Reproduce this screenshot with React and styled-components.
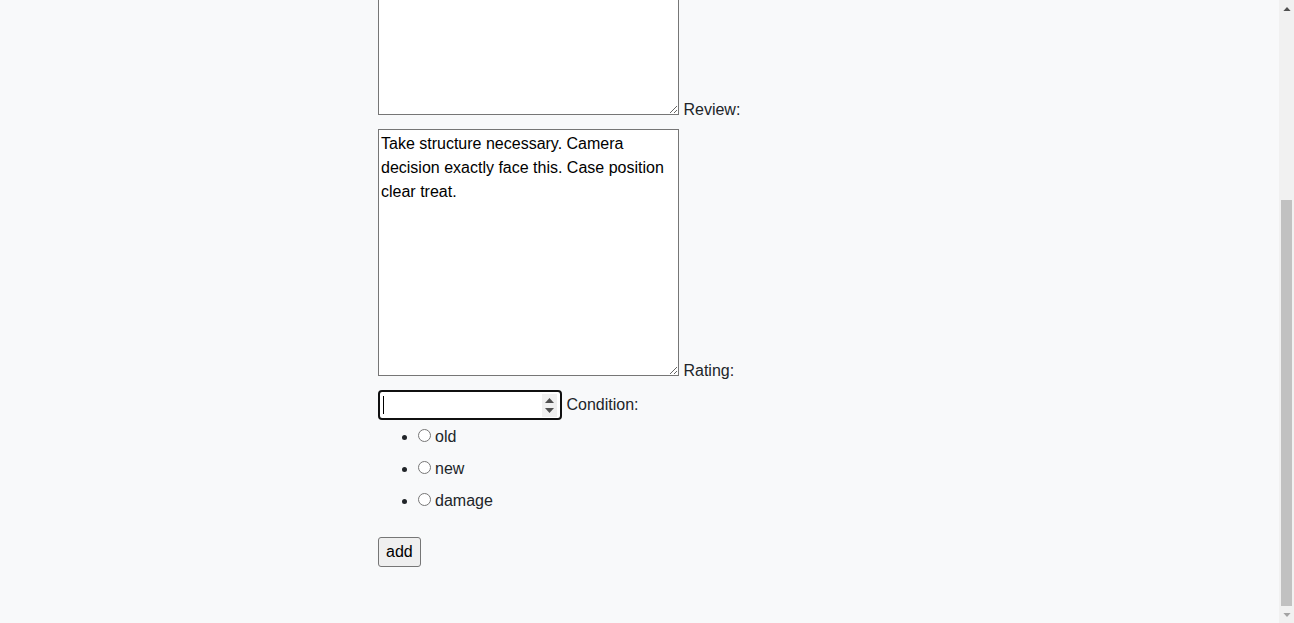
import React, { useLayoutEffect, useRef } from 'react'
import styled, { createGlobalStyle } from 'styled-components'

const GlobalStyle = createGlobalStyle`
html, body {
  margin:0;
  padding:0;
  overflow:hidden;
}
`

const Page = styled.div`
display:flex;
height:100vh;
background:#f8f9fa;
color:#212529;
font-family:"Liberation Sans", Arial, sans-serif;
font-size:16px;
line-height:1.5;
`

const Viewport = styled.div`
flex:1;
min-width:0;
overflow:hidden;
`

const ScrollBar = styled.div`
display:flex;
flex-direction:column;
width:15px;
flex:none;
background:#f1f1f1;
`

const ScrollArrow = styled.div`
display:flex;
align-items:center;
justify-content:center;
height:17px;
flex:none;
`

const ScrollTrack = styled.div`
flex:1;
display:flex;
flex-direction:column;
justify-content:flex-end;
padding:0 2px;
`

const ScrollThumb = styled.div`
height:406px;
background:#c1c1c1;
`

const Form = styled.form`
width:523px;
margin:0 auto;
padding:16px 0 56px;
`

const FieldLabel = styled.label``

const TextArea = styled.textarea`
display:inline-block;
width:301px;
height:247px;
box-sizing:border-box;
margin:7px 0 0;
padding:2px;
border:1px solid #767676;
font:inherit;
color:#000;
background:#fff;
resize:both;
vertical-align:baseline;
`

const NumberField = styled.span`
display:inline-flex;
align-items:center;
width:184px;
height:30px;
box-sizing:border-box;
margin-top:7px;
border:2px solid #101010;
border-radius:4px;
background:#fff;
padding:0 3px;
vertical-align:-4px;
`

const Caret = styled.span`
width:1px;
height:18px;
background:#000;
flex:none;
`

const NumberInput = styled.input`
flex:1;
min-width:0;
border:none;
outline:none;
font:inherit;
padding:0;
background:transparent;
appearance:textfield;
&::-webkit-inner-spin-button,
&::-webkit-outer-spin-button{
  -webkit-appearance:none;
  margin:0;
}
`

const Spinner = styled.span`
display:flex;
flex-direction:column;
align-items:center;
justify-content:space-between;
width:15px;
height:23px;
box-sizing:border-box;
padding:4px 0;
background:#f0f0f0;
flex:none;
`

const ConditionList = styled.ul`
margin:1px 0 20px;
padding-left:40px;
`

const ConditionItem = styled.li`
padding:4px 0;
`

const Radio = styled.input`
margin:3px 4px 0 0;
width:13px;
height:13px;
`

const AddButton = styled.button`
font:inherit;
line-height:24px;
color:#000;
padding:2px 7px;
border:1px solid #767676;
border-radius:3px;
background:#efefef;
margin:0;
`

const Arrow = ({ up, color = '#505050', w = 9, h = 5 }) => (
  <svg width={w} height={h} viewBox="0 0 9 5">
    <path d={up ? 'M0 5 L4.5 0 L9 5 Z' : 'M0 0 L4.5 5 L9 0 Z'} fill={color} />
  </svg>
)

const conditions = ['old', 'new', 'damage']

const App = () => {
  const viewRef = useRef(null)

  useLayoutEffect(() => {
    const el = viewRef.current
    if (el) el.scrollTop = el.scrollHeight
  }, [])

  return (
    <Page>
      <GlobalStyle />
      <Viewport ref={viewRef}>
        <Form onSubmit={e => e.preventDefault()}>
          <TextArea aria-label="Description" /> <FieldLabel>Review:</FieldLabel>
          <TextArea defaultValue="Take structure necessary. Camera decision exactly face this. Case position clear treat." /> <FieldLabel>Rating:</FieldLabel>
          <NumberField>
            <Caret />
            <NumberInput type="number" />
            <Spinner>
              <Arrow up />
              <Arrow />
            </Spinner>
          </NumberField> <FieldLabel>Condition:</FieldLabel>
          <ConditionList>
            {conditions.map(c => (
              <ConditionItem key={c}>
                <Radio type="radio" name="condition" value={c} />
                {c}
              </ConditionItem>
            ))}
          </ConditionList>
          <AddButton type="submit">add</AddButton>
        </Form>
      </Viewport>
      <ScrollBar>
        <ScrollArrow>
          <Arrow up w={8} h={4} />
        </ScrollArrow>
        <ScrollTrack>
          <ScrollThumb />
        </ScrollTrack>
        <ScrollArrow>
          <Arrow color="#a3a3a3" w={8} h={4} />
        </ScrollArrow>
      </ScrollBar>
    </Page>
  )
}

export default App
